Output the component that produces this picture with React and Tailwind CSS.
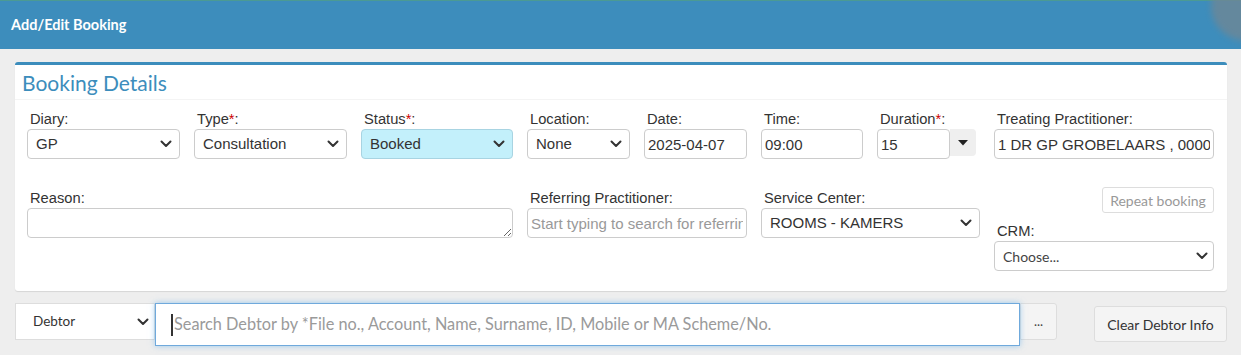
import React from "react";

const SANS = { fontFamily: '"Liberation Sans", Arial, sans-serif' };
const SRC = { fontFamily: 'Lato, "Noto Sans", sans-serif' };

function Chevron({ className = "" }) {
  return (
    <svg className={className} width="12" height="8" viewBox="0 0 12 8" fill="none">
      <path d="M1.5 1.5 L6 6 L10.5 1.5" stroke="#333" strokeWidth="2" strokeLinecap="round" strokeLinejoin="round" />
    </svg>
  );
}

function Label({ children, req }) {
  return (
    <div className="pl-[3px] text-[14.7px] leading-[18px] h-[19px] text-[#333] whitespace-nowrap" style={SANS}>
      {children}
      {req && <span className="text-[#c00]">*</span>}:
    </div>
  );
}

function Select({ value, bg = "bg-white", border = "border-[#ccc]" }) {
  return (
    <div className="relative">
      <select
        className={`appearance-none w-full h-[30px] ${bg} border ${border} rounded-[4px] pl-[8px] pr-[24px] text-[15px] text-[#333] outline-none`}
        style={SANS}
        defaultValue={value}
      >
        <option>{value}</option>
      </select>
      <Chevron className="absolute right-[8px] top-[11px] pointer-events-none" />
    </div>
  );
}

function Input({ value, placeholder }) {
  return (
    <input
      className="w-full h-[30px] bg-white border border-[#ccc] rounded-[4px] px-[3px] text-[15px] text-[#333] placeholder:text-[#999] outline-none"
      style={SANS}
      defaultValue={value}
      placeholder={placeholder}
    />
  );
}

export default function App() {
  return (
    <div className="w-[1241px] h-[355px] bg-[#eeeeee] relative overflow-hidden">
      {/* header */}
      <div className="h-[49px] bg-[#3d8dbc] border-t border-[#4b9a93] flex items-center pl-[11px] relative">
        <span className="text-white text-[14.5px] font-bold" style={SRC}>
          Add/Edit Booking
        </span>
        <div className="absolute right-[-40px] top-[-30px] w-[70px] h-[70px] rounded-full bg-[#6e8796] opacity-80 blur-[3px]" />
      </div>

      {/* card */}
      <div className="mx-[15px] mt-[13px] w-[1212px] bg-white rounded-[3px] border-t-[3px] border-[#3c8dbc] shadow-[0_1px_1px_rgba(0,0,0,0.1)]">
        <div className="h-[35px] border-b border-[#f4f4f4] flex items-center pl-[7px]">
          <span className="text-[21px] text-[#3c8dbc] leading-none" style={SRC}>
            Booking Details
          </span>
        </div>
        <div className="pl-[12px] pt-[10px] pb-[20px]">
          <div className="grid grid-cols-[153px_153px_152px_103px_103px_102px_103px_220px] gap-x-[14px] gap-y-[29px] items-start">
            <div>
              <Label>Diary</Label>
              <Select value="GP" />
            </div>
            <div>
              <Label req>Type</Label>
              <Select value="Consultation" />
            </div>
            <div>
              <Label req>Status</Label>
              <Select value="Booked" bg="bg-[#c3f0fb]" border="border-[#a8d4e2]" />
            </div>
            <div>
              <Label>Location</Label>
              <Select value="None" />
            </div>
            <div>
              <Label>Date</Label>
              <Input value="2025-04-07" />
            </div>
            <div>
              <Label>Time</Label>
              <Input value="09:00" />
            </div>
            <div>
              <Label req>Duration</Label>
              <div className="flex items-start">
                <div className="w-[73px]">
                  <Input value="15" />
                </div>
                <div className="w-[26px] h-[27px] bg-[#efefef] rounded-r-[4px] flex items-center justify-center">
                  <svg width="10" height="6" viewBox="0 0 10 6">
                    <path d="M0 0 L10 0 L5 5.5 Z" fill="#222" />
                  </svg>
                </div>
              </div>
            </div>
            <div>
              <Label>Treating Practitioner</Label>
              <Input value="1 DR GP GROBELAARS , 0000" />
            </div>

            {/* row 2 */}
            <div className="col-span-3 pt-[1px]">
              <Label>Reason</Label>
              <textarea
                className="block w-full h-[30px] bg-white border border-[#ccc] rounded-[4px] px-[3px] text-[15px] outline-none resize-y"
                style={SANS}
              />
            </div>
            <div className="col-span-2 pt-[1px]">
              <Label>Referring Practitioner</Label>
              <Input placeholder="Start typing to search for referring practitioner" />
            </div>
            <div className="col-span-2 pt-[1px]">
              <Label>Service Center</Label>
              <Select value="ROOMS - KAMERS" />
            </div>
            <div className="-mt-[1px]">
              <div className="flex justify-end">
                <button
                  className="h-[26px] w-[112px] border border-[#ddd] rounded-[3px] bg-white text-[14px] text-[#999]"
                  style={SRC}
                >
                  Repeat booking
                </button>
              </div>
              <div className="mt-[9px]">
                <Label>CRM</Label>
              </div>
              <div className="relative">
                <select
                  className="appearance-none w-full h-[30px] bg-white border border-[#ccc] rounded-[4px] pl-[8px] pr-[24px] text-[14px] text-[#444] outline-none"
                  style={SRC}
                  defaultValue="Choose..."
                >
                  <option>Choose...</option>
                </select>
                <Chevron className="absolute right-[6px] top-[11px] pointer-events-none" />
              </div>
            </div>
          </div>
        </div>
      </div>

      {/* debtor row */}
      <div className="flex items-start mt-[12px] pl-[15px]">
        <div className="relative w-[140px]">
          <select
            className="appearance-none w-full h-[37px] bg-white border border-[#ddd] pl-[17px] text-[13.5px] text-[#333] outline-none"
            style={SRC}
            defaultValue="Debtor"
          >
            <option>Debtor</option>
          </select>
          <Chevron className="absolute right-[6px] top-[15px] pointer-events-none" />
        </div>
        <div className="relative w-[865px] h-[43px] bg-white border border-[#6fa9dc] shadow-[0_0_6px_rgba(102,175,233,0.6)] flex items-center pl-[15px]">
          <div className="w-[2px] h-[22px] bg-[#333] mr-[1px]" />
          <span className="text-[16.3px] text-[#9a9a9a] whitespace-nowrap" style={SRC}>
            Search Debtor by *File no., Account, Name, Surname, ID, Mobile or MA Scheme/No.
          </span>
        </div>
        <button
          className="w-[37px] h-[37px] bg-[#f4f4f4] border border-[#ddd] rounded-r-[3px] text-[13px] text-[#444]"
          style={SRC}
        >
          ...
        </button>
        <button
          className="ml-[37px] mt-[3px] w-[133px] h-[36px] bg-[#f4f4f4] border border-[#ddd] rounded-[3px] text-[14px] text-[#333]"
          style={SRC}
        >
          Clear Debtor Info
        </button>
      </div>
    </div>
  );
}
